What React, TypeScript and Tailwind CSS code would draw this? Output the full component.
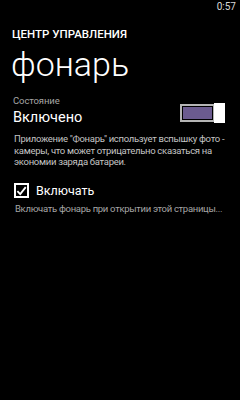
import React, { useState } from 'react';

const font = { fontFamily: 'Roboto, "Open Sans", "Noto Sans", sans-serif' };

export default function App() {
  const [on, setOn] = useState(true);
  const [auto, setAuto] = useState(true);

  return (
    <div className="w-[240px] h-[400px] bg-black text-white overflow-hidden" style={font}>
      {/* Status bar */}
      <div className="flex justify-end h-[14px] pr-[4px] pt-[1px] text-[10px] leading-[12px] text-[#d8d8d8]">
        0:57
      </div>

      <div className="pl-[12px] pr-[10px]">
        {/* Header */}
        <div className="mt-[12px] text-[11.5px] leading-[16px] font-medium">
          ЦЕНТР УПРАВЛЕНИЯ
        </div>
        <div className="mt-[2px] text-[34px] leading-[40px] font-light -ml-[1px]">
          фонарь
        </div>

        {/* Toggle */}
        <div className="mt-[10px] pl-[1px] text-[9.5px] leading-[14px] text-[#a6a6a6] tracking-[-0.1px]">Состояние</div>
        <div className="flex items-start justify-between">
          <div className="pl-[1px] text-[14.5px] leading-[20px]">{on ? 'Включено' : 'Выключено'}</div>
          <button
            onClick={() => setOn(!on)}
            className="relative mr-[5px] -mt-[5px] w-[45px] h-[20px] flex items-center"
          >
            <div className="w-[35px] h-[18px] border-2 border-[#b5b5b5] p-[1px] flex">
              <div className={`flex-1 ${on ? 'bg-[#6b5b8f]' : 'bg-black'}`} />
            </div>
            <div className={`absolute top-0 w-[11px] h-[20px] bg-white ${on ? 'right-0' : 'left-0'}`} />
          </button>
        </div>

        <p className="mt-[5px] pl-[2px] text-[9.5px] leading-[11.5px] text-[#c4c4c4] tracking-[-0.3px]">
          Приложение "Фонарь" использует вспышку фото - камеры, что может отрицательно сказаться на экономии заряда батареи.
        </p>

        {/* Checkbox */}
        <button onClick={() => setAuto(!auto)} className="mt-[13px] ml-[2px] flex items-center gap-[7px]">
          <div className="w-[15px] h-[15px] border-2 border-white flex items-center justify-center">
            {auto && (
              <svg width="12" height="12" viewBox="0 0 12 12">
                <path d="M1.5 6.2 L4.6 9.3 L10.6 1.8" stroke="white" strokeWidth="2" fill="none" />
              </svg>
            )}
          </div>
          <span className="text-[12.5px] leading-[20px]">Включать</span>
        </button>
        <div className="mt-[1px] pl-[3px] text-[9.5px] leading-[14px] text-[#a6a6a6] tracking-[-0.3px] whitespace-nowrap">
          Включать фонарь при открытии этой страницы...
        </div>
      </div>
    </div>
  );
}
